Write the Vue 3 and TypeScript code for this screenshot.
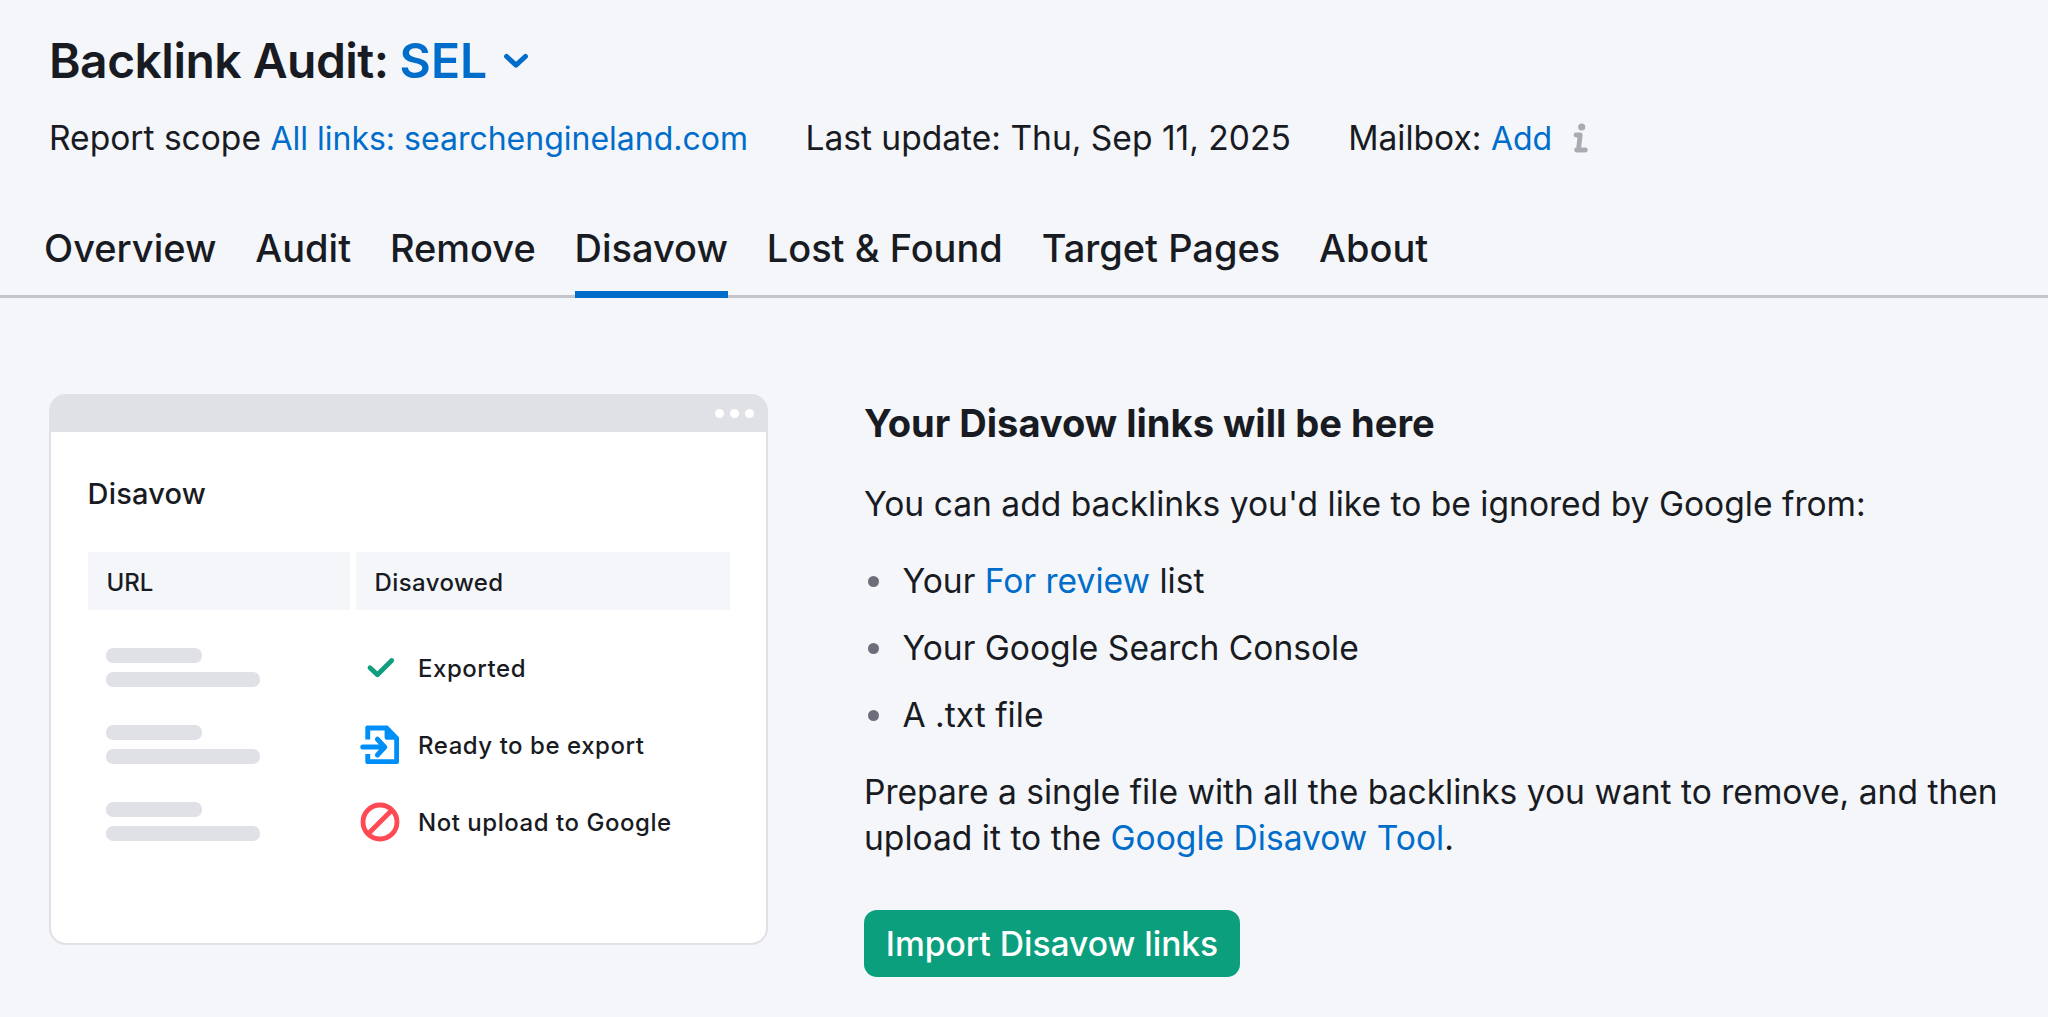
<script setup lang="ts">
interface Row {
  icon: 'check' | 'export' | 'ban'
  label: string
}

const tabs: string[] = ['Overview', 'Audit', 'Remove', 'Disavow', 'Lost & Found', 'Target Pages', 'About']
const activeTab = 'Disavow'

const rows: Row[] = [
  { icon: 'check', label: 'Exported' },
  { icon: 'export', label: 'Ready to be export' },
  { icon: 'ban', label: 'Not upload to Google' },
]
</script>

<template>
  <div class="page">
    <header class="header">
      <h1 class="title">
        <span class="name">Backlink Audit:</span>
        <a class="project">SEL</a>
        <svg class="chevron" width="26" height="18" viewBox="0 0 26 18" fill="none">
          <path d="M3.6 4.5L13 13.2L22.4 4.5" stroke="currentColor" stroke-width="5" stroke-linecap="round" stroke-linejoin="round" />
        </svg>
      </h1>
      <div class="meta">
        <span class="scope">Report scope <a>All links: searchengineland.com</a></span>
        <span class="updated">Last update: Thu, Sep 11, 2025</span>
        <span class="mailbox">Mailbox: <a>Add</a></span>
        <svg class="info" width="16" height="30" viewBox="0 0 16 30" fill="none">
          <circle cx="8.7" cy="4" r="3.6" fill="#a9abb2" />
          <path d="M3 12H7.2L5.4 27M3.6 27H12.4" stroke="#a9abb2" stroke-width="4.8" stroke-linecap="round" stroke-linejoin="round" />
        </svg>
      </div>
    </header>

    <nav class="tabs">
      <a v-for="tab in tabs" :key="tab" class="tab" :class="{ active: tab === activeTab }">{{ tab }}</a>
    </nav>

    <main class="content">
      <section class="card">
        <div class="card-bar"><i></i><i></i><i></i></div>
        <div class="card-body">
          <h2 class="card-title">Disavow</h2>
          <div class="table-head">
            <div class="th th-url">URL</div>
            <div class="th th-state">Disavowed</div>
          </div>
          <div v-for="row in rows" :key="row.label" class="row">
            <div class="bars">
              <span class="bar short"></span>
              <span class="bar"></span>
            </div>
            <svg class="icon" width="40" height="40" viewBox="0 0 40 40" fill="none">
              <path v-if="row.icon === 'check'" d="M10 19.7L17.4 26.7L31.7 12.5" stroke="#0f9f7e" stroke-width="4.8" stroke-linecap="round" stroke-linejoin="round" />
              <template v-else-if="row.icon === 'export'">
                <path d="M5.3 14.6V2.6Q5.3 .6 7.3 .6H27.6L39 12.2V37Q39 39 37 39H7.3Q5.3 39 5.3 37V29H10.2V34.3H34.2V14.8H26.8Q24.6 14.8 24.6 12.6V5.4H10.2V14.6Z" fill="#008ff8" />
                <path d="M2.8 22.1H24.5M17.4 14.2L24.8 22.1L17.4 30" stroke="#008ff8" stroke-width="5" stroke-linecap="round" stroke-linejoin="round" />
              </template>
              <template v-else>
                <circle cx="20" cy="20" r="17" stroke="#ff4953" stroke-width="4.8" />
                <path d="M8.5 31.5L31.5 8.5" stroke="#ff4953" stroke-width="4.8" />
              </template>
            </svg>
            <span class="row-label">{{ row.label }}</span>
          </div>
        </div>
      </section>

      <section class="info-panel">
        <h2 class="heading">Your Disavow links will be here</h2>
        <p class="lead">You can add backlinks you'd like to be ignored by Google from:</p>
        <ul class="list">
          <li>Your <a>For review</a> list</li>
          <li>Your Google Search Console</li>
          <li>A .txt file</li>
        </ul>
        <p class="prepare">
          Prepare a single file with all the backlinks you want to remove, and then<br />
          upload it to the <a>Google Disavow Tool</a>.
        </p>
        <button class="button" type="button">Import Disavow links</button>
      </section>
    </main>
  </div>
</template>

<style>
body {
  margin: 0;
  background: #f4f6fa;
}
</style>

<style scoped>
.page {
  box-sizing: border-box;
  width: 2048px;
  height: 1017px;
  overflow: hidden;
  background: #f4f6fa;
  color: #191b23;
  font-family: Inter, 'Liberation Sans', sans-serif;
  font-size: 33.58px;
  font-optical-sizing: none;
  line-height: 46px;
  white-space: nowrap;
}
a {
  color: #006dca;
}
h1,
h2,
p,
ul {
  margin: 0;
  padding: 0;
}
.header {
  height: 167px;
  padding: 31px 49px 0;
}
.title {
  display: flex;
  align-items: center;
  height: 60px;
  font-size: 48px;
  line-height: 60px;
  font-weight: 600;
}
.name {
  letter-spacing: -0.53px;
}
.project {
  margin-left: 11px;
  font-size: 48.2px;
}
.chevron {
  margin: 0 0 0 16px;
  color: #006dca;
}
.meta {
  display: flex;
  align-items: center;
  margin-top: 24px;
  height: 46px;
  font-size: 33.55px;
}
.meta a {
  font-size: 32px;
}
.updated,
.mailbox {
  margin-left: 57.4px;
}
.info {
  margin-left: 21px;
}
.tabs {
  box-sizing: border-box;
  display: flex;
  gap: 38.8px;
  height: 100px;
  padding-left: 44px;
  box-shadow: inset 0 -3px #c4c6cb;
}
.tab {
  box-sizing: border-box;
  height: 100px;
  border-bottom: 7px solid transparent;
  color: #191b23;
  font-size: 38px;
  font-weight: 500;
  line-height: 101px;
}
.tab.active {
  border-bottom-color: #006dca;
}
.content {
  display: flex;
  align-items: flex-start;
  padding: 96px 0 0 49px;
}
.card {
  box-sizing: border-box;
  width: 719px;
  height: 551px;
  border: 2px solid #e0e1e6;
  border-radius: 17px;
  background: #fff;
}
.card-bar {
  display: flex;
  align-items: center;
  justify-content: flex-end;
  gap: 6px;
  box-sizing: border-box;
  height: 36px;
  padding: 0 12px 1px 0;
  border-radius: 14px 14px 0 0;
  background: #e0e1e6;
}
.card-bar i {
  width: 9px;
  height: 9px;
  border-radius: 50%;
  background: #fff;
}
.card-body {
  padding: 39px 36px 0 37px;
}
.card-title {
  margin-left: -0.5px;
  font-size: 29px;
  font-weight: 500;
  line-height: 46px;
  letter-spacing: 0.2px;
}
.table-head {
  display: flex;
  gap: 6px;
  margin: 35px 0 19px;
}
.th {
  box-sizing: border-box;
  height: 58px;
  padding-left: 18.5px;
  background: #f4f6fa;
  font-size: 24px;
  font-weight: 500;
  line-height: 62px;
}
.th-url {
  width: 262px;
}
.th-state {
  width: 374px;
  letter-spacing: 0.4px;
}
.row {
  display: flex;
  align-items: center;
  height: 77px;
}
.bars {
  display: flex;
  flex-direction: column;
  gap: 9px;
  width: 254px;
  margin-left: 18px;
}
.bar {
  width: 154px;
  height: 15px;
  border-radius: 7px;
  background: #e0e1e6;
}
.bar.short {
  width: 96px;
}
.row-label {
  margin-left: 18px;
  padding-top: 2px;
  font-size: 24px;
  font-weight: 500;
  line-height: 40px;
  letter-spacing: 0.54px;
}
.info-panel {
  margin-left: 96px;
  padding-top: 6px;
}
.heading {
  font-size: 38.1px;
  font-weight: 700;
  line-height: 46px;
}
.lead {
  margin-top: 35px;
}
.list {
  display: flex;
  flex-direction: column;
  gap: 21px;
  margin: 31px 0;
  list-style: none;
}
.list li {
  display: flex;
  align-items: center;
  white-space: pre;
}
.list li::before {
  content: '';
  width: 11px;
  height: 11px;
  margin: 0 23.5px 0 4px;
  border-radius: 50%;
  background: #6c6e79;
}
.button {
  display: block;
  height: 67px;
  width: 376px;
  margin-top: 49px;
  padding: 0;
  border: 0;
  border-radius: 13px;
  background: #0b9f7e;
  color: #fff;
  font: 500 33.6px/67px Inter, 'Liberation Sans', sans-serif;
  font-optical-sizing: none;
  text-align: center;
}
</style>
